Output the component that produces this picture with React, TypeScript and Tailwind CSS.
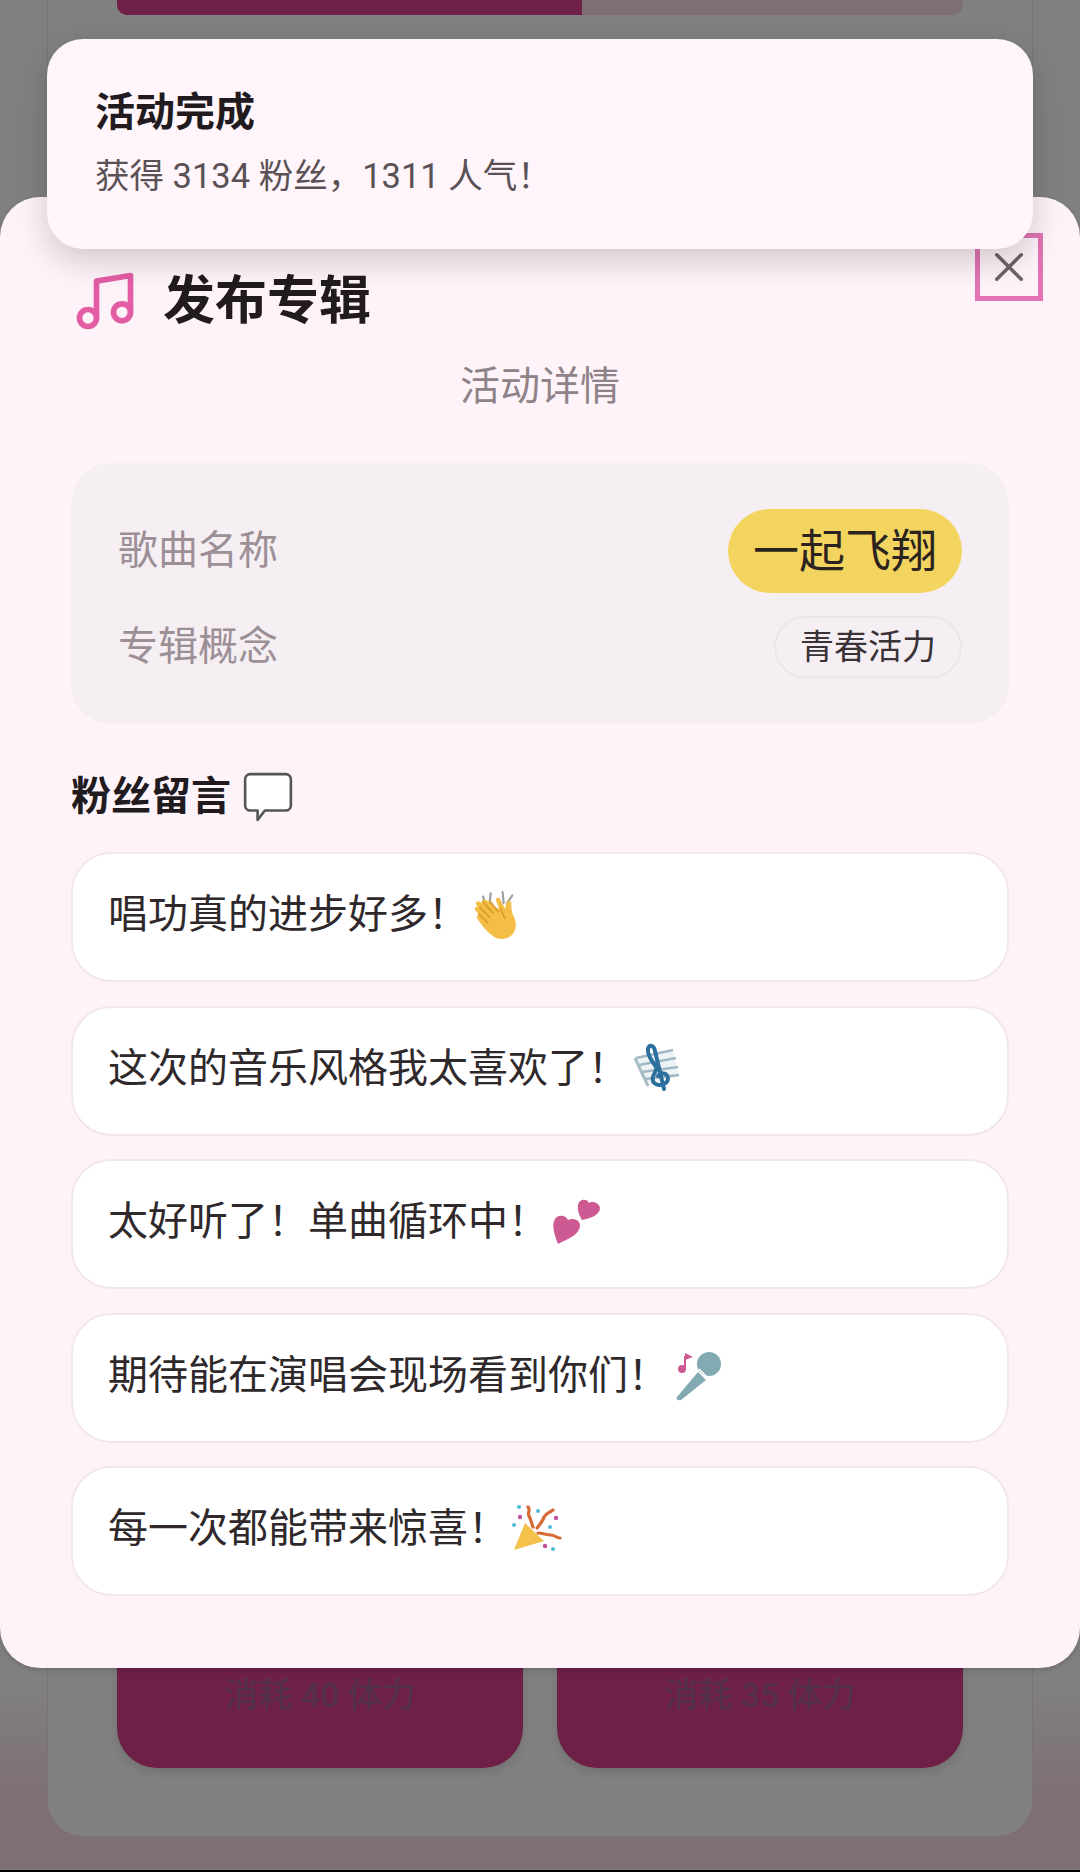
const FONT = "font-['Roboto','Noto_Sans_CJK_SC',sans-serif]";

function ClapEmoji() {
  return (
    <svg width="46" height="50" viewBox="5 3 42 46" className="shrink-0 -mt-[5px]">
      <path d="M15 9l2 7M22 6l-1 9M33 5l1 10M42 8l-5 7" stroke="#9aa0a3" strokeWidth="2" strokeLinecap="round" fill="none" />
      <path d="M8 22c-2-2 1-5 3-3l-2-2c-2-2 1-5 3-3l2 1c-1-3 3-4 5-2l6 5 5 3-3-8c-1-3 3-4 4-1l4 8c1-2 1-4 2-6 1-2 4-1 4 1 0 4 0 8 2 12 3 6 3 12-1 17-5 5-12 5-17 2-6-4-11-10-15-16-2-3 0-5 2-3l-3-4c-2-3 1-5 3-3z" fill="#f4bd45" />
      <path d="M12 19l9 9M11 25l8 8M15 14l9 10M31 20l4 9M21 13l8 10" stroke="#dd9a2b" strokeWidth="1.6" strokeLinecap="round" fill="none" />
    </svg>
  );
}

function ScoreEmoji() {
  return (
    <svg width="50" height="50" viewBox="12 14 50 50" className="shrink-0 -mt-[5px]">
      <path d="M15 29l38-8 6 26-31 10z" fill="#eef3f5" />
      <path d="M15 29l13 28" stroke="#a9bfc5" strokeWidth="3" fill="none" />
      <path d="M16 29l37-8M19 36l37-7M22 43l36-5M25 50l34-4" stroke="#9fb9c4" strokeWidth="2.6" fill="none" />
      <path d="M44 60L35 22C34 16 29 15 28 20C27 27 33 33 36 38C38 42 31 46 33 52C35 58 47 57 48 50C48 44 40 42 38 47" stroke="#2b6f9f" strokeWidth="4" strokeLinecap="round" fill="none" />
    </svg>
  );
}

function HeartsEmoji() {
  return (
    <svg width="50" height="50" viewBox="0 0 50 50" className="shrink-0 -mt-[5px]">
      <path d="M26 8c1-6 9-7 11-2 2-2 10-1 11 5 0 7-9 10-18 12-3-5-5-10-4-15z" fill="#cd5a92" />
      <path d="M3 22c3-5 11-4 13 1 4-2 12-1 12 6 0 8-12 13-22 18C3 39-1 29 3 22z" fill="#cd5a92" />
    </svg>
  );
}

function MicEmoji() {
  return (
    <svg width="52" height="52" viewBox="0 0 52 52" className="shrink-0 -mt-[5px]">
      <path d="M5 48l21-25 8 8-25 20c-2 1-6-1-4-3z" fill="#82aab3" />
      <circle cx="37" cy="15" r="12" fill="#82aab3" />
      <path d="M27 20l10 10" stroke="#fff" strokeWidth="1.6" />
      <path d="M13 7v13" stroke="#cd5a92" strokeWidth="2" />
      <path d="M13 4l8 4-8 3z" fill="#cd5a92" />
      <circle cx="10" cy="20" r="4" fill="#cd5a92" />
    </svg>
  );
}

function PartyEmoji() {
  return (
    <svg width="50" height="50" viewBox="12 14 50 50" className="shrink-0 -mt-[5px]">
      <path d="M14 60l11-27 19 18z" fill="#f4c14b" />
      <path d="M28 17c3 3-1 6 1 9 2 3 2 6 4 11M53 20c-4 3-7 3-9 7-1 4-4 7-7 11M60 48c-4 0-5-3-9-3-4 0-9-2-13-2" stroke="#d66a35" strokeWidth="3.2" strokeLinecap="round" fill="none" />
      <circle cx="19" cy="17" r="2" fill="#4fb9dc" />
      <circle cx="38" cy="21" r="2" fill="#4fb9dc" />
      <circle cx="50" cy="37" r="2" fill="#4fb9dc" />
      <circle cx="14" cy="35" r="2" fill="#4fb9dc" />
      <circle cx="53" cy="59" r="2" fill="#4fb9dc" />
      <circle cx="20" cy="27" r="2.2" fill="#c24f9c" />
      <circle cx="56" cy="28" r="2.2" fill="#c24f9c" />
      <circle cx="45" cy="56" r="2.2" fill="#c24f9c" />
    </svg>
  );
}

const messages = [
  { text: "唱功真的进步好多！", icon: <ClapEmoji /> },
  { text: "这次的音乐风格我太喜欢了！", icon: <ScoreEmoji /> },
  { text: "太好听了！单曲循环中！", icon: <HeartsEmoji /> },
  { text: "期待能在演唱会现场看到你们！", icon: <MicEmoji /> },
  { text: "每一次都能带来惊喜！", icon: <PartyEmoji /> },
];

function Backdrop() {
  return (
    <div className="h-[1870px] bg-gradient-to-b from-[#808080] from-90% to-[#7e7076] to-96% px-[47px]">
      <div className="h-[1837px] flex flex-col px-[69px] bg-[#808080] border-x border-b border-[#7a7276] rounded-b-[36px]">
        <div className="h-[15px] flex rounded-b-[10px] overflow-hidden bg-[#7e6f76]">
          <div className="w-[465px] bg-[#6f2049]" />
        </div>
        <div className="flex-1" />
        <div className="grid grid-cols-2 gap-[34px] mb-[68px]">
          <PlayButton label="消耗 40 体力" />
          <PlayButton label="消耗 35 体力" />
        </div>
      </div>
    </div>
  );
}

function PlayButton({ label }: { label: string }) {
  return (
    <div className="h-[120px] rounded-b-[40px] bg-[#6f2049] shadow-[0_4px_10px_rgba(0,0,0,0.12)] flex items-end justify-center pb-[51px] text-[34px] leading-[44px] font-medium text-[#55304a]">
      {label}
    </div>
  );
}

export default function App() {
  return (
    <div className={`relative w-[1080px] h-[1872px] overflow-hidden bg-black ${FONT}`}>
      <Backdrop />

      {/* Dialog */}
      <div className="absolute left-0 right-0 top-[197px] h-[1471px] rounded-[40px] bg-[#fef3f9] px-[71px] shadow-[0_2px_6px_rgba(0,0,0,0.15)]">
        <div className="relative flex items-center gap-[24px] h-[60px] mt-[74px]">
          <svg width="68" height="68" viewBox="0 0 24 24" fill="none" stroke="#e35da4" strokeWidth="2" strokeLinecap="round" strokeLinejoin="round" className="shrink-0">
            <path d="M9 18V5l12-2v13" />
            <circle cx="6" cy="18" r="3" />
            <circle cx="18" cy="16" r="3" />
          </svg>
          <h2 className="mt-[1px] text-[52px] leading-[60px] font-bold text-[#211a1e]">发布专辑</h2>
        </div>
        <p className="mt-[28px] text-center text-[40px] leading-[56px] text-[#8f8389]">活动详情</p>

        <div className="mt-[48px] h-[261px] rounded-[40px] bg-[#f5eff4] px-[47px] flex flex-col pt-[46px]">
          <div className="flex items-center justify-between">
            <span className="text-[40px] leading-[56px] text-[#9c8f96]">歌曲名称</span>
            <span className="h-[84px] w-[234px] flex items-center justify-center rounded-full bg-[#f3d45f] text-[46px] text-[#2b2320]">一起飞翔</span>
          </div>
          <div className="mt-[23px] flex items-center justify-between">
            <span className="text-[40px] leading-[56px] text-[#9c8f96]">专辑概念</span>
            <span className="h-[62px] w-[188px] flex items-center justify-center rounded-full border-2 border-[#ece6ea] text-[34px] text-[#3a3236]">青春活力</span>
          </div>
        </div>

        <div className="mt-[47px] flex items-center gap-[11px] h-[52px]">
          <h3 className="text-[40px] leading-[52px] font-bold text-[#211a1e]">粉丝留言</h3>
          <svg width="52" height="52" viewBox="0 0 50 50" fill="#fff" stroke="#555" strokeWidth="2.5" strokeLinejoin="round" className="shrink-0">
            <path d="M8 3h34a5 5 0 0 1 5 5v25a5 5 0 0 1-5 5H22l-7 9v-9H8a5 5 0 0 1-5-5V8a5 5 0 0 1 5-5z" />
          </svg>
        </div>

        <div className="mt-[29px] flex flex-col gap-[23.5px]">
          {messages.map((m) => (
            <div key={m.text} className="h-[130px] rounded-[40px] border-2 border-[#f3e7ee] bg-white pl-[35px] pr-[36px] flex items-center gap-[4px] text-[40px] text-[#2f292c]">
              <span className="-mt-[4px]">{m.text}</span>
              {m.icon}
            </div>
          ))}
        </div>
      </div>

      {/* Close button, partly under the toast */}
      <div className="absolute left-[975px] top-[233px] w-[68px] h-[68px] border-[5px] border-[#e274b3] flex items-center justify-center">
        <svg width="42" height="42" viewBox="0 0 24 24" fill="none" stroke="#6a6468" strokeWidth="2" strokeLinecap="round">
          <path d="M5 5l14 14M19 5L5 19" />
        </svg>
      </div>

      {/* Toast */}
      <div className="absolute left-[47px] top-[39px] w-[986px] h-[210px] rounded-[36px] bg-[#fff5fa] px-[48px] pt-[48px] shadow-[0_12px_32px_rgba(0,0,0,0.18)]">
        <p className="text-[40px] leading-[52px] font-bold text-[#211a1e]">活动完成</p>
        <p className="mt-[13px] text-[34.5px] leading-[48px] text-[#5a5156]">获得 3134 粉丝，1311 人气！</p>
      </div>
    </div>
  );
}
